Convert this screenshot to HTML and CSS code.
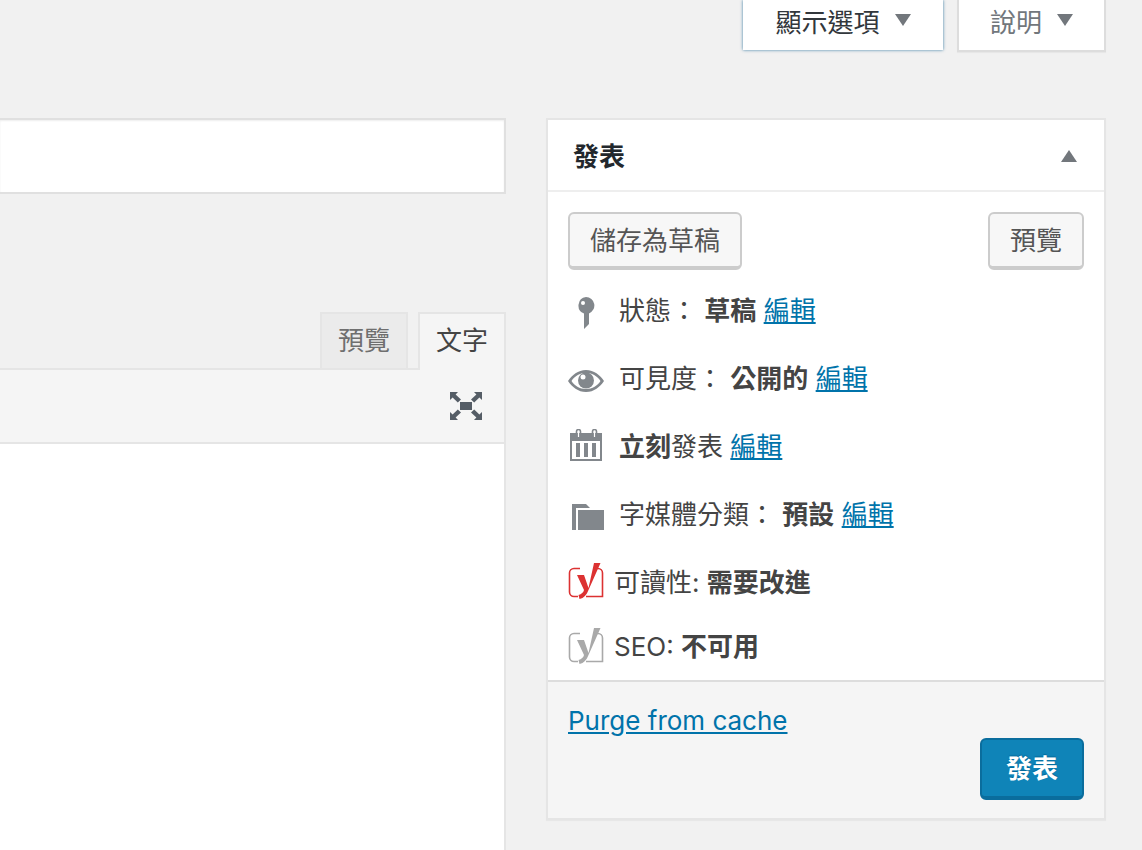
FILE: index.html
```html
<!DOCTYPE html>
<html lang="zh-Hant">
<head>
<meta charset="utf-8">
<title>發表</title>
<link rel="stylesheet" href="styles.css">
</head>
<body>
<div class="meta-links">
  <button class="meta-btn meta-active"><span>顯示選項</span><i class="caret-down"></i></button>
  <button class="meta-btn meta-help"><span>說明</span><i class="caret-down"></i></button>
</div>
<div class="columns">
  <main class="editor-col">
    <div class="title-input"></div>
    <div class="tabs">
      <div class="tab tab-off">預覽</div>
      <div class="tab tab-on">文字</div>
    </div>
    <div class="toolbar">
      <svg class="fs-icon" width="32" height="28" viewBox="0 0 32 28">
        <path fill="#555d66" d="M10 10h12v8H10zM0 0h8L5.600 2.400 11 7.600 7.800 10.600 2.600 5.400 0 8zM32 0v8l-2.600-2.600-5.200 5.200-3.200-3 5.400-5.200L24 0zM0 28v-8l2.600 2.600 5.200-5.200 3.200 3-5.400 5.200L8 28zM32 28h-8l2.400-2.400-5.400-5.200 3.200-3 5.200 5.200L32 20z"/>
      </svg>
    </div>
    <div class="editor-body"></div>
  </main>
  <aside class="publish">
    <header class="publish-head">
      <h2>發表</h2>
      <i class="caret-up"></i>
    </header>
    <div class="publish-body">
      <div class="actions">
        <button class="btn">儲存為草稿</button>
        <button class="btn">預覽</button>
      </div>
      <div class="row row-status">
        <span class="ico ico-pin"><svg width="18" height="32" viewBox="0 0 18 32"><path fill="#82878c" d="M9 0a8.500 8.500 0 0 1 3 16.400V27l-5 5V16.400A8.500 8.500 0 0 1 9 0z"/><circle cx="6" cy="6" r="2" fill="#fff"/></svg></span>
        <span>狀態： <b>草稿</b> <a href="#">編輯</a></span>
      </div>
      <div class="row row-vis">
        <span class="ico ico-eye"><svg width="36" height="24" viewBox="0 0 36 24"><path fill="#82878c" fill-rule="evenodd" d="M18 1c8 0 14 5 18 11-4 6-10 11-18 11S4 18 0 12C4 6 10 1 18 1zm0 3C11.500 4 6.500 7.500 3.500 12c3 4.500 8 8 14.500 8s11.500-3.500 14.500-8C29.500 7.500 24.500 4 18 4z"/><circle cx="18" cy="11.500" r="8" fill="#82878c"/><circle cx="15" cy="8" r="2.500" fill="#fff"/></svg></span>
        <span>可見度： <b>公開的</b> <a href="#">編輯</a></span>
      </div>
      <div class="row row-date">
        <span class="ico ico-cal"><svg width="32" height="32" viewBox="0 0 32 32"><path fill="#82878c" fill-rule="evenodd" d="M0 4h32v28H0zM2 12v18h28V12zM6 14h4v14H6zm8 0h4v14h-4zm8 0h4v14h-4z"/><path fill="none" stroke="#82878c" stroke-width="1.600" d="M6.500 5V2.500a2 2 0 0 1 4 0V5M22.500 5V2.500a2 2 0 0 1 4 0V5"/><path fill="none" stroke="#fff" stroke-width="1.200" d="M8.500 4v4M24.500 4v4"/></svg></span>
        <span><b>立刻</b>發表 <a href="#">編輯</a></span>
      </div>
      <div class="row row-cat">
        <span class="ico ico-folder"><svg width="32" height="26" viewBox="0 0 32 26"><path fill="#82878c" d="M0 0h14l4 4H4v22H0zM6 6h26v20H6z"/></svg></span>
        <span>字媒體分類： <b>預設</b> <a href="#">編輯</a></span>
      </div>
      <div class="row row-yoast row-read">
        <svg class="yoast" width="36" height="36" viewBox="0 0 36 36"><path fill="none" stroke="#dc3232" stroke-width="1.600" d="M12 5.500H6A4.500 4.500 0 0 0 1.500 10V29A4.500 4.500 0 0 0 6 33.500h4M29 5.500h1A4.500 4.500 0 0 1 34.500 10V33.500H18"/><path fill="#dc3232" d="M26 0h6.500L20.500 27c-2 5-4.500 8-9 9l-1-4c3-1 5-2.500 5.500-5L9 12h7l4.500 13z"/></svg>
        <span>可讀性: <b>需要改進</b></span>
      </div>
      <div class="row row-yoast row-seo">
        <svg class="yoast" width="36" height="36" viewBox="0 0 36 36"><path fill="none" stroke="#a9a9a9" stroke-width="1.600" d="M12 5.500H6A4.500 4.500 0 0 0 1.500 10V29A4.500 4.500 0 0 0 6 33.500h4M29 5.500h1A4.500 4.500 0 0 1 34.500 10V33.500H18"/><path fill="#a9a9a9" d="M26 0h6.500L20.500 27c-2 5-4.500 8-9 9l-1-4c3-1 5-2.500 5.500-5L9 12h7l4.500 13z"/></svg>
        <span>SEO: <b>不可用</b></span>
      </div>
    </div>
    <footer class="publish-foot">
      <a href="#" class="purge">Purge from cache</a>
      <div class="foot-action"><button class="btn-primary">發表</button></div>
    </footer>
  </aside>
</div>
</body>
</html>
```
FILE: styles.css
```css
* { box-sizing: border-box; }
html, body { margin: 0; height: 850px; overflow: hidden; }
body {
  background: #f1f1f1;
  color: #444;
  font-family: Inter, "Noto Sans CJK TC", sans-serif;
  font-size: 26px;
  line-height: 36px;
}
button { font-family: inherit; }
a { color: #0073aa; text-decoration: underline; }
b { font-weight: 700; }

.meta-links {
  display: flex;
  justify-content: flex-end;
  gap: 14px;
  height: 118px;
  padding-right: 36px;
}
.meta-btn {
  display: flex;
  align-items: center;
  justify-content: center;
  gap: 14px;
  height: 52px;
  padding: 0 0 10px;
  background: #fff;
  border: 2px solid #ddd;
  border-top: 0;
  box-shadow: 0 1px 1px rgba(0,0,0,.04);
  font-size: 26px;
  color: #72777c;
}
.meta-active {
  width: 200px;
  height: 50px;
  padding-bottom: 10px;
  color: #32373c;
  border: 0;
  box-shadow: 0 0 3px rgba(0,90,140,.75);
}
.meta-help { width: 149px; }
.caret-down {
  display: block;
  width: 0; height: 0;
  border-left: 8px solid transparent;
  border-right: 8px solid transparent;
  border-top: 12px solid #72777c;
  margin-left: 1px;
}
.columns { display: flex; align-items: flex-start; }

.editor-col { width: 506px; flex: none; display: flex; flex-direction: column; height: 732px; }
.title-input {
  height: 76px;
  background: #fff;
  border: 2px solid #e0e0e0;
  border-left: 0;
  box-shadow: inset 0 1px 2px rgba(0,0,0,.07);
}
.tabs {
  display: flex;
  justify-content: flex-end;
  gap: 10px;
  margin-top: 118px;
  height: 58px;
}
.tab {
  height: 58px;
  text-align: center;
  line-height: 54px;
  border: 2px solid #e5e5e5;
  border-bottom: 0;
}
.tab-off { width: 88px; background: #ebebeb; color: #6f6f6f; border-bottom: 2px solid #e5e5e5; }
.tab-on { width: 88px; background: #f5f5f5; color: #444; position: relative; z-index: 1; }
.toolbar {
  height: 76px;
  flex: none;
  display: flex;
  align-items: center;
  justify-content: flex-end;
  padding-right: 22px;
  background: #f5f5f5;
  border-top: 2px solid #e5e5e5;
  border-right: 2px solid #e5e5e5;
  border-bottom: 2px solid #e5e5e5;
  margin-top: -2px;
}
.fs-icon { display: block; }
.editor-body { flex: 1; background: #fff; border-right: 2px solid #e5e5e5; }

.publish {
  width: 560px;
  margin-left: 40px;
  flex: none;
  background: #fff;
  border: 2px solid #e5e5e5;
  box-shadow: 0 1px 1px rgba(0,0,0,.04);
}
.publish-head {
  height: 72px;
  display: flex;
  align-items: center;
  justify-content: space-between;
  padding: 4px 27px 0 25px;
  border-bottom: 2px solid #eee;
}
.publish-head h2 { margin: 0; font-size: 26px; line-height: 36px; color: #23282d; }
.caret-up {
  display: block;
  width: 0; height: 0;
  margin-top: -3px;
  border-left: 8px solid transparent;
  border-right: 8px solid transparent;
  border-bottom: 12px solid #72777c;
}
.publish-body { padding: 20px 20px 0; height: 488px; }
.actions { display: flex; justify-content: space-between; }
.btn {
  height: 58px;
  padding: 2px 20px 0;
  background: #f7f7f7;
  border: 2px solid #ccc;
  border-bottom-width: 4px;
  border-radius: 6px;
  color: #555;
  font-size: 26px;
  line-height: 50px;
}
.row { display: flex; align-items: center; height: 36px; }
.row-status { margin-top: 23px; }
.row-vis { margin-top: 32px; }
.row-date { margin-top: 32px; }
.row-cat { margin-top: 32px; }
.row-read { margin-top: 32px; }
.row-seo { margin-top: 28px; }
.ico { width: 51px; flex: none; display: flex; }
.ico svg { display: block; }
.ico-pin svg { margin: 4px 0 0 9px; }
.ico-eye svg { margin: 4px 0 0 0; }
.ico-cal { align-self: flex-start; }
.ico-cal svg { margin-left: 2px; }
.ico-folder svg { margin: 4px 0 0 4px; }
.yoast { flex: none; margin-right: 10px; display: block; }
.row-read .yoast { margin-bottom: 4px; }
.row-seo .yoast { margin-bottom: 2px; }

.publish-foot {
  height: 138px;
  padding: 21px 20px 0;
  background: #f5f5f5;
  border-top: 2px solid #ddd;
}
.purge { display: block; height: 36px; }
.foot-action { display: flex; justify-content: flex-end; margin-top: -1px; }
.btn-primary {
  width: 104px;
  height: 62px;
  padding: 0 0 4px;
  background: #0f84b8;
  border: 2px solid #0a6d9d;
  border-bottom-width: 4px;
  border-radius: 6px;
  color: #fff;
  font-size: 26px;
  font-weight: 700;
  text-shadow: 0 -1px 1px #006799;
}
```
